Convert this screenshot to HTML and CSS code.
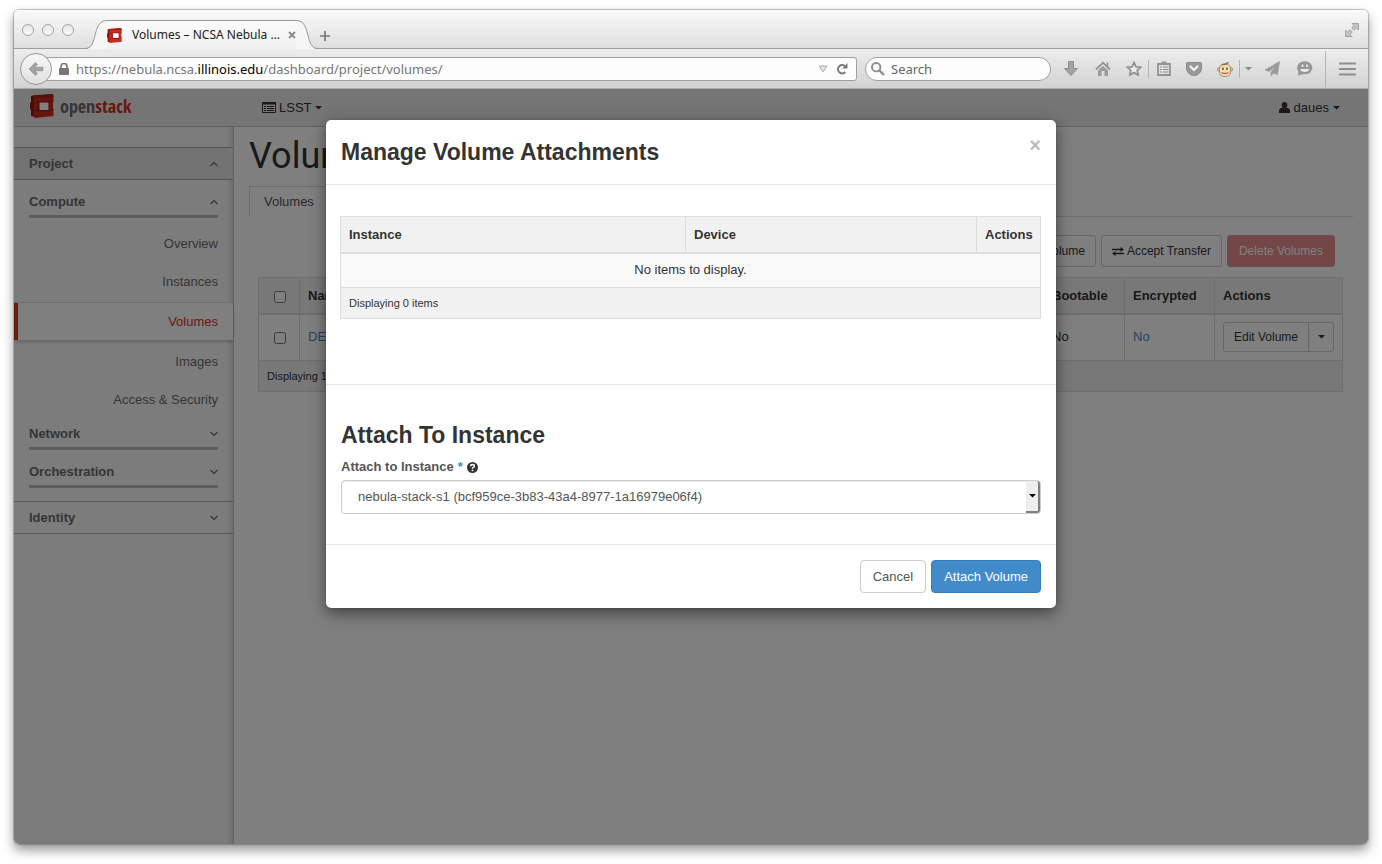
FILE: index.html
```html
<!DOCTYPE html>
<html lang="en">
<head>
<meta charset="utf-8">
<title>Volumes – NCSA Nebula</title>
<link rel="stylesheet" href="styles.css">
</head>
<body>
<svg class="defs" width="0" height="0" aria-hidden="true">
  <symbol id="cube" viewBox="0 0 24 24">
    <path d="M1 2 L5 1 V23 L1 22 V16 L0 15 V9 L1 8 Z" fill="#8c1a12"/>
    <path d="M4 1.500 L22 0 L23.500 1.500 V7 L23 7.500 V15 L23.500 15.500 V22 L5 24 L4 23 Z" fill="#cf2a20"/>
    <path d="M4 1.500 L22 0 L23.500 1.500 V3 L4 4.500 Z" fill="#a82018"/>
    <path d="M4 8.500 H8 M19 7.500 H23.500 M4 16.500 H8 M19 15.500 H23.500" stroke="#9a1b13"/>
    <path d="M7.500 7 H19.500 V17.500 H7.500 Z" fill="#9a1b13"/>
    <path d="M9.500 8.500 H18.500 V16 H9.500 Z" fill="#fff"/>
  </symbol>
  <symbol id="up" viewBox="0 0 8 6"><path d="M.5 5 L4 1.500 L7.500 5" fill="none" stroke="currentColor" stroke-width="1.200"/></symbol>
  <symbol id="down" viewBox="0 0 8 6"><path d="M.5 1 L4 4.500 L7.500 1" fill="none" stroke="currentColor" stroke-width="1.200"/></symbol>
  <symbol id="caret" viewBox="0 0 7 4"><path d="M0 0 H7 L3.500 3.500 Z" fill="currentColor"/></symbol>
</svg>

<div class="window">
  <header class="titlebar">
    <div class="lights"><span></span><span></span><span></span></div>
    <div class="tab">
      <svg class="tab-edge" viewBox="0 0 22 29"><path d="M0 29 C14 29 6 .5 22 .5 V29 Z" fill="#f6f6f6"/><path d="M0 28.500 C14 28.500 6 .5 22 .5" fill="none" stroke="#9a9a9a"/></svg>
      <div class="tab-body">
        <svg class="favicon"><use href="#cube"/></svg>
        <span class="tab-title">Volumes – NCSA Nebula …</span>
        <button class="tab-close" aria-label="Close tab"><svg width="8" height="8" viewBox="0 0 8 8"><path d="M1 1 L7 7 M7 1 L1 7" stroke="#8c8c8c" stroke-width="2"/></svg></button>
      </div>
      <svg class="tab-edge" viewBox="0 0 22 29"><path d="M22 29 C8 29 16 .5 0 .5 V29 Z" fill="#f6f6f6"/><path d="M22 28.500 C8 28.500 16 .5 0 .5" fill="none" stroke="#9a9a9a"/></svg>
    </div>
    <button class="new-tab" aria-label="New tab"><svg width="10" height="10" viewBox="0 0 10 10"><path d="M5 0 V10 M0 5 H10" stroke="#777" stroke-width="1.700"/></svg></button>
    <button class="fullscreen" aria-label="Full screen"><svg width="14" height="14" viewBox="0 0 14 14"><path d="M7 .5 H13.500 V7 L11.500 5 L9 7.300 L6.700 5 L9 2.500 Z M7 13.500 H.5 V7 L2.500 9 L5 6.700 L7.300 9 L5 11.500 Z" fill="#c4c4c4" stroke="#999" stroke-width=".8"/></svg></button>
  </header>

  <nav class="toolbar">
    <button class="back" aria-label="Back"><svg width="16" height="14" viewBox="0 0 16 14"><path d="M1 7 L7.500 .5 L9.500 2.500 L7 5.200 H15 V8.800 H7 L9.500 11.500 L7.500 13.500 Z" fill="#a2a2a2" stroke="#888" stroke-width=".6"/></svg></button>
    <div class="urlbar">
      <svg width="10" height="12" viewBox="0 0 10 12"><path d="M2 6 V3.500 A3 3 0 0 1 8 3.500 V6" fill="none" stroke="#777" stroke-width="1.700"/><rect y="5" width="10" height="7" rx="1" fill="#777"/></svg>
      <span class="url">https://nebula.ncsa.<b>illinois.edu</b>/dashboard/project/volumes/</span>
      <svg width="10" height="8" viewBox="0 0 10 8"><path d="M1 1 H9 L5 7 Z" fill="#e4e4e4" stroke="#aaa"/></svg>
      <button class="reload" aria-label="Reload"><svg width="12" height="12" viewBox="0 0 12 12"><path d="M9.300 3.400 A4.200 4.200 0 1 0 9.300 9" fill="none" stroke="#7b7b7b" stroke-width="2"/><path d="M11.500 0 V5.500 H6 Z" fill="#7b7b7b"/></svg></button>
    </div>
    <label class="search">
      <svg width="14" height="14" viewBox="0 0 14 14"><circle cx="5.200" cy="5.200" r="4.200" fill="none" stroke="#8c8c8c" stroke-width="1.900"/><path d="M8.500 8.500 L13 13" stroke="#8c8c8c" stroke-width="2.400"/></svg>
      <input type="text" placeholder="Search" aria-label="Search">
    </label>
    <div class="tools">
      <button aria-label="Downloads"><svg width="14" height="15" viewBox="0 0 14 15"><path d="M4.500 .5 H9.500 V7.500 H13.500 L7 14.500 L.5 7.500 H4.500 Z" fill="#a4a4a4" stroke="#8b8b8b"/></svg></button>
      <button aria-label="Home"><svg width="16" height="15" viewBox="0 0 16 15"><path d="M1 8.500 L8 1.700 L15 8.500" fill="none" stroke="#919191" stroke-width="1.800"/><path d="M12.500 1.500 V5" fill="none" stroke="#919191" stroke-width="1.500"/><path d="M3 9.500 L8 4.800 L13 9.500 V15 H9.500 V10 H6.500 V15 H3 Z" fill="#9b9b9b"/></svg></button>
      <button class="tight" aria-label="Bookmark"><svg width="16" height="15" viewBox="0 0 16 15"><path d="M8 1.500 L10 5.800 L14.700 6.300 L11.200 9.400 L12.200 14 L8 11.600 L3.800 14 L4.800 9.400 L1.300 6.300 L6 5.800 Z" fill="#ececec" stroke="#939393" stroke-width="1.800"/></svg></button>
      <i class="rule"></i>
      <button class="tight" aria-label="Bookmarks list"><svg width="14" height="15" viewBox="0 0 14 15"><path d="M1 3 H13 V14 H1 Z" fill="#e2e2e2" stroke="#919191" stroke-width="1.800"/><path d="M5 1 H9 V3 H5 Z" fill="#919191" stroke="#919191"/><path d="M3 6 H5 M6 6 H11.500 M3 8.500 H5 M6 8.500 H11.500 M3 11 H5 M6 11 H11.500" stroke="#8e8e8e" stroke-width="1.200"/></svg></button>
      <button aria-label="Pocket"><svg width="16" height="14" viewBox="0 0 16 14"><path d="M1.500 .5 H14.500 Q15.500 .5 15.500 1.500 V6 A7.500 7.500 0 0 1 .5 6 V1.500 Q.5 .5 1.500 .5 Z" fill="#999" stroke="#8a8a8a"/><path d="M4.500 4.500 L8 8 L11.500 4.500" fill="none" stroke="#f2f2f2" stroke-width="2.200" stroke-linecap="round"/></svg></button>
      <button class="tight" aria-label="Greasemonkey"><svg width="16" height="16" viewBox="0 0 16 16"><circle cx="2" cy="8.500" r="1.700" fill="#e9c58c" stroke="#8b7354" stroke-width=".7"/><circle cx="14" cy="8.500" r="1.700" fill="#e9c58c" stroke="#8b7354" stroke-width=".7"/><path d="M2.500 7 Q3 3 8 3 Q13 3 13.500 7 V10 Q14 15.500 8 15.500 Q2 15.500 2.500 10 Z" fill="#f3dcae" stroke="#9a8060" stroke-width=".8"/><path d="M3.500 5 Q5 2 8 2.500 L12 .5 L11 3 Q9 4.200 7 4 Q4.500 4 3.500 5 Z" fill="#8d6b4b"/><path d="M6 6.500 V9 M10 6.500 V9" stroke="#4d6b58" stroke-width="1.600"/><path d="M4.500 11.500 Q8 13.500 11.500 11.500" fill="none" stroke="#bd5848" stroke-width="1.300"/></svg></button>
      <i class="rule"></i>
      <button class="narrow" aria-label="Greasemonkey menu"><svg class="gray" width="7" height="4"><use href="#caret"/></svg></button>
      <button aria-label="Share"><svg width="15" height="15" viewBox="0 0 15 15"><path d="M14.500 .5 L0 9 L4 10.500 L12 3.500 L6 11 V15 L8.300 12 L12.500 13.500 Z" fill="#999" stroke="#8f8f8f" stroke-width=".5"/></svg></button>
      <button aria-label="Chat"><svg width="17" height="15" viewBox="0 0 17 15"><ellipse cx="8.700" cy="6.800" rx="7.700" ry="6.500" fill="#979797"/><path d="M2.500 9 L2 14.500 L8 13 Z" fill="#979797"/><path d="M6.500 3.500 V6 M11 3.500 V6" stroke="#f0f0f0" stroke-width="1.600"/><path d="M4 8 H13.500 Q12.500 11 8.700 11 Q5 11 4 8 Z" fill="#e8e8e8"/></svg></button>
      <i class="rule tall"></i>
      <button aria-label="Menu"><svg width="17" height="14" viewBox="0 0 17 14"><path d="M1 1.500 H16 M1 7 H16 M1 12.500 H16" stroke="#8e8e8e" stroke-width="2.200" stroke-linecap="round"/></svg></button>
    </div>
  </nav>

  <div class="page">
    <header class="topbar">
      <a class="brand" href="#"><svg width="24" height="24"><use href="#cube"/></svg><span>open<b>stack</b></span></a>
      <button class="project-pick"><svg width="14" height="11" viewBox="0 0 14 11"><path d="M.5 .5 H13.500 V10.500 H.5 Z" fill="none" stroke="#333"/><path d="M0 0 H14 V2.500 H0 Z" fill="#333"/><path d="M2 4.500 H4 M5 4.500 H12 M2 6.500 H4 M5 6.500 H12 M2 8.500 H4 M5 8.500 H12" stroke="#333"/></svg>LSST<svg width="7" height="4"><use href="#caret"/></svg></button>
      <button class="user"><svg width="11" height="11" viewBox="0 0 11 11"><ellipse cx="5.500" cy="3" rx="2.800" ry="3" fill="#333"/><path d="M0 11 V8.500 Q0 6.500 3.500 5.500 H7.500 Q11 6.500 11 8.500 V11 Z" fill="#333"/></svg>daues<svg width="7" height="4"><use href="#caret"/></svg></button>
    </header>

    <div class="columns">
      <aside class="sidebar">
        <button class="panel open">Project<svg width="8" height="6"><use href="#up"/></svg></button>
        <div class="groups">
          <button class="group">Compute<svg width="8" height="6"><use href="#up"/></svg></button>
          <ul>
            <li><a href="#">Overview</a></li>
            <li><a href="#">Instances</a></li>
            <li class="active"><a href="#">Volumes</a></li>
            <li><a href="#">Images</a></li>
            <li><a href="#">Access &amp; Security</a></li>
          </ul>
          <button class="group">Network<svg width="8" height="6"><use href="#down"/></svg></button>
          <button class="group">Orchestration<svg width="8" height="6"><use href="#down"/></svg></button>
        </div>
        <button class="panel">Identity<svg width="8" height="6"><use href="#down"/></svg></button>
      </aside>

      <main class="content">
        <h1>Volumes</h1>
        <div class="tabs"><a href="#">Volumes</a></div>
        <div class="actions">
          <button class="btn">+ Create Volume</button>
          <button class="btn"><svg width="12" height="9" viewBox="0 0 12 9"><path d="M0 2.500 H9 M3 6.500 H12" stroke="#333" stroke-width="1.500"/><path d="M8.500 0 L12 2.500 L8.500 5 Z M3.500 4 L0 6.500 L3.500 9 Z" fill="#333"/></svg> Accept Transfer</button>
          <button class="btn danger" disabled>Delete Volumes</button>
        </div>
        <table class="grid volumes">
          <colgroup><col class="c-check"><col><col class="c-boot"><col class="c-enc"><col class="c-act"></colgroup>
          <thead><tr><th><input type="checkbox" aria-label="Select all"></th><th>Name</th><th>Bootable</th><th>Encrypted</th><th>Actions</th></tr></thead>
          <tbody><tr><td><input type="checkbox" aria-label="Select volume"></td><td><a href="#">DEC</a></td><td>No</td><td><a href="#">No</a></td>
            <td><div class="split"><button>Edit Volume</button><button aria-label="More actions"><svg width="7" height="4"><use href="#caret"/></svg></button></div></td></tr></tbody>
          <tfoot><tr><td colspan="5">Displaying 1 item</td></tr></tfoot>
        </table>
      </main>
    </div>

    <div class="backdrop">
      <section class="modal" role="dialog" aria-labelledby="dialog-title">
        <header class="modal-head">
          <h2 id="dialog-title">Manage Volume Attachments</h2>
          <button class="close" aria-label="Close">×</button>
        </header>
        <div class="modal-table">
          <table class="grid attachments">
            <colgroup><col><col class="c-device"><col class="c-actions"></colgroup>
            <thead><tr><th>Instance</th><th>Device</th><th>Actions</th></tr></thead>
            <tbody><tr><td colspan="3">No items to display.</td></tr></tbody>
            <tfoot><tr><td colspan="3">Displaying 0 items</td></tr></tfoot>
          </table>
        </div>
        <div class="modal-form">
          <h2>Attach To Instance</h2>
          <label for="instance">Attach to Instance <em>*</em>
            <svg width="11" height="11" viewBox="0 0 11 11"><circle cx="5.500" cy="5.500" r="5.500" fill="#333"/><path d="M3.600 4.200 Q3.600 2.500 5.500 2.500 Q7.400 2.500 7.400 4 Q7.400 4.900 6.300 5.400 Q5.500 5.800 5.500 6.800" fill="none" stroke="#fff" stroke-width="1.500"/><path d="M4.700 7.700 H6.300 V9.200 H4.700 Z" fill="#fff"/></svg></label>
          <div class="select">
            <select id="instance"><option>nebula-stack-s1 (bcf959ce-3b83-43a4-8977-1a16979e06f4)</option></select>
            <span class="drop"><svg width="7" height="4"><use href="#caret"/></svg></span>
          </div>
        </div>
        <footer class="modal-foot">
          <button class="btn cancel">Cancel</button>
          <button class="btn primary">Attach Volume</button>
        </footer>
      </section>
    </div>
  </div>
</div>
</body>
</html>
```
FILE: styles.css
```css
* { box-sizing: border-box; }
body {
  margin: 0;
  padding: 10px 14px 20px;
  min-height: 100vh;
  display: flex;
  background: #fff;
  color: #333;
  font: 13px/18px "Liberation Sans", Arial, sans-serif;
}
button { font: inherit; color: inherit; background: none; border: 0; padding: 0; margin: 0; }
a { text-decoration: none; color: #428bca; }
svg { flex: none; display: block; }
.defs { position: absolute; }

.window {
  flex: 1;
  min-width: 0;
  display: flex;
  flex-direction: column;
  border-radius: 5px;
  overflow: hidden;
  box-shadow: 0 0 1px 1px rgba(0,0,0,.22), 0 6px 12px rgba(0,0,0,.42);
}

/* browser chrome */
.titlebar {
  display: flex;
  align-items: flex-end;
  height: 39px;
  padding: 0 9px 0 8px;
  background: linear-gradient(#fafafa, #dedede);
  box-shadow: inset 0 -1px #a0a0a0;
  font-family: "Noto Sans", sans-serif;
}
.lights { display: flex; gap: 8px; align-self: center; margin-right: 11px; }
.lights span { width: 12px; height: 12px; border: 1px solid #a3a3a3; border-radius: 50%; background: linear-gradient(#e6e6e6, #fafafa); }
.tab { display: flex; height: 29px; }
.tab-edge { width: 22px; height: 29px; }
.tab-body { display: flex; align-items: center; width: 189px; background: linear-gradient(#fbfbfb, #f0f0f0); border-top: 1px solid #9a9a9a; }
.favicon { width: 15px; height: 15px; margin-right: 10px; }
.tab-title { flex: 1; font-size: 12px; white-space: nowrap; color: #222; }
.new-tab { align-self: center; margin: 12px 0 0 2px; }
.fullscreen { align-self: center; margin-left: auto; }

.toolbar {
  display: flex;
  align-items: center;
  height: 40px;
  padding-left: 6px;
  background: linear-gradient(#ededed, #d2d2d2);
  border-bottom: 1px solid #a8a8a8;
  font-family: "Noto Sans", sans-serif;
}
.back {
  display: flex; align-items: center; justify-content: center;
  width: 32px; height: 32px;
  border: 1px solid #979797; border-radius: 50%;
  background: linear-gradient(#f8f8f8, #e0e0e0);
  z-index: 1;
}
.urlbar {
  flex: 1; display: flex; align-items: center;
  height: 24px; margin-left: -8px; padding: 0 8px 0 14px;
  background: #fdfdfd; border: 1px solid #a0a0a0; border-radius: 3px;
}
.url { flex: 1; margin-left: 7px; color: #777; white-space: nowrap; }
.url b { font-weight: 400; color: #000; }
.reload { margin-left: 8px; }
.search {
  display: flex; align-items: center; gap: 6px;
  width: 186px; height: 24px; margin-left: 8px; padding-left: 5px;
  background: #fdfdfd; border: 1px solid #a0a0a0; border-radius: 12px;
}
.search input { flex: 1; min-width: 0; border: 0; padding: 0; background: none; font: inherit; outline: 0; }
.search input::placeholder { color: #666; opacity: 1; }
.tools { display: flex; align-items: center; margin-left: 4px; padding-right: 5px; }
.tools button { display: flex; align-items: center; justify-content: center; width: 32px; height: 32px; }
.tools .tight { width: 29px; }
.tools .narrow { width: 16px; }
.tools .rule { width: 1px; height: 18px; background: #b4b4b4; }
.tools .tall { height: 36px; margin: 0 5px; }
.gray { color: #888; }

/* dashboard */
.page { position: relative; flex: 1; display: flex; flex-direction: column; background: #fff; }
.topbar { display: flex; align-items: center; height: 38px; padding-right: 28px; background: #ebebeb; border-bottom: 1px solid #c4c4c4; }
.brand { display: flex; align-items: center; gap: 6px; width: 232px; padding: 0 0 3px 16px; color: #6b6b6b; font: 300 18px/24px "Open Sans Condensed", "Liberation Sans Narrow", sans-serif; }
.brand b { font-weight: 300; color: #cf2f27; }
.project-pick, .user { display: flex; align-items: center; gap: 3px; margin-left: 16px; }
.user { gap: 4px; margin-left: auto; }
.columns { flex: 1; display: flex; }
.sidebar { width: 220px; padding-top: 20px; background: #f9f9f9; border-right: 1px solid #c4c4c4; box-shadow: inset -6px 0 6px -4px rgba(0,0,0,.16); color: #6b6b6b; }
.panel, .group { display: flex; align-items: center; justify-content: space-between; font-weight: 700; }
.panel { width: 100%; height: 33px; padding: 0 15px; border: solid #aaa; border-width: 1px 0; }
.panel.open { background: #e4e4e4; }
.groups { padding-bottom: 13px; }
.group { width: 189px; height: 38px; margin-left: 15px; padding-top: 9px; border-bottom: 3px solid #bcbcbc; }
.sidebar ul { list-style: none; margin: 0; padding: 7px 0 0; }
.sidebar li { padding: 10px 15px 10px 11px; border-left: 4px solid transparent; text-align: right; }
.sidebar li:last-child { padding-bottom: 3px; }
.sidebar li a { color: #6b6b6b; }
.sidebar li.active { margin: 2px 0 3px; padding-bottom: 9px; background: #fff; border-color: #d93a23; box-shadow: 0 -1px #dcdcdc, 0 2px 3px rgba(0,0,0,.2); }
.sidebar li.active a { color: #dc3028; }
.content { flex: 1; min-width: 0; padding: 9px 15px 0; }
h1 { margin: 0; font: 36px/40px Roboto, sans-serif; color: #333; }
.tabs { display: flex; margin-top: 10px; border-bottom: 1px solid #ddd; }
.tabs a { margin-bottom: -1px; padding: 6px 14px 5px; border: 1px solid #ddd; border-bottom-color: #fff; color: #555; }
.actions { display: flex; justify-content: flex-end; gap: 5px; padding: 18px 18px 10px 0; }
.btn { height: 33px; padding: 0 12px; border: 1px solid #ccc; border-radius: 4px; background: #fff; }
.actions .btn { display: flex; align-items: center; gap: 3px; height: 32px; padding: 0 10px; border-radius: 3px; font-size: 12px; }
.actions .danger { padding: 0 11px; border-color: #e39a97; background: #e68f8c; color: #fff; }

.grid { width: 100%; border-collapse: collapse; table-layout: fixed; }
.grid th, .grid td { padding: 0 8px; border: 1px solid #ddd; text-align: left; }
.grid th { height: 36px; padding-top: 2px; background: #f1f1f1; border-bottom-width: 2px; }
.grid tfoot td { height: 31px; background: #f1f1f1; font-size: 11px; }
.volumes { width: calc(100% - 19px); margin-left: 9px; }
.volumes tbody td { height: 47px; }
.volumes input { display: block; width: 12px; height: 12px; margin: 2px 0 0 7px; }
.c-check { width: 41px; }
.c-boot { width: 81px; }
.c-enc { width: 90px; }
.c-act { width: 128px; }
.split { display: flex; width: 111px; height: 30px; border: 1px solid #ccc; border-radius: 3px; background: #fff; font-size: 12px; }
.split button { flex: 1; }
.split button + button { flex: none; display: flex; align-items: center; justify-content: center; width: 25px; border-left: 1px solid #ccc; }

/* dialog */
.backdrop { position: absolute; inset: 0; display: flex; align-items: flex-start; justify-content: center; padding-top: 31px; background: rgba(0,0,0,.5); }
.modal { width: 730px; max-width: 94%; border-radius: 5px; background: #fff; box-shadow: 0 5px 15px rgba(0,0,0,.5), 0 0 1px rgba(0,0,0,.5); }
.modal-head { display: flex; align-items: flex-start; justify-content: space-between; padding: 18px 15px; border-bottom: 1px solid #e5e5e5; }
.modal h2 { margin: 0; font-size: 23px; line-height: 28px; }
.close { font-size: 20px; font-weight: 700; line-height: 14px; color: #bbb; }
.modal-table { padding: 31px 15px 65px 14px; border-bottom: 1px solid #e5e5e5; }
.attachments tbody td { height: 35px; background: #f9f9f9; text-align: center; }
.c-device { width: 291px; }
.c-actions { width: 64px; }
.modal-form { padding: 36px 15px 30px; border-bottom: 1px solid #e5e5e5; }
.modal-form label { display: flex; align-items: center; gap: 4px; margin: 9px 0 4px; font-weight: 700; color: #555; }
.modal-form em { color: #428bca; font-style: normal; }
.select { position: relative; }
.select select { appearance: none; display: block; width: 100%; height: 34px; padding: 0 16px; border: 1px solid #ccc; border-radius: 4px; background: #fff; color: #555; font: inherit; box-shadow: inset 0 1px 1px rgba(0,0,0,.08); }
.drop { position: absolute; top: 1px; right: 1px; bottom: 1px; display: flex; align-items: center; justify-content: center; width: 14px; border: solid #808080; border-width: 0 2px 2px 0; border-radius: 0 3px 3px 0; background: #eee; color: #000; pointer-events: none; }
.modal-foot { display: flex; justify-content: flex-end; gap: 5px; padding: 15px; }
.cancel { color: #555; }
.primary { border-color: #357ebd; background: #428bca; color: #fff; }
```
